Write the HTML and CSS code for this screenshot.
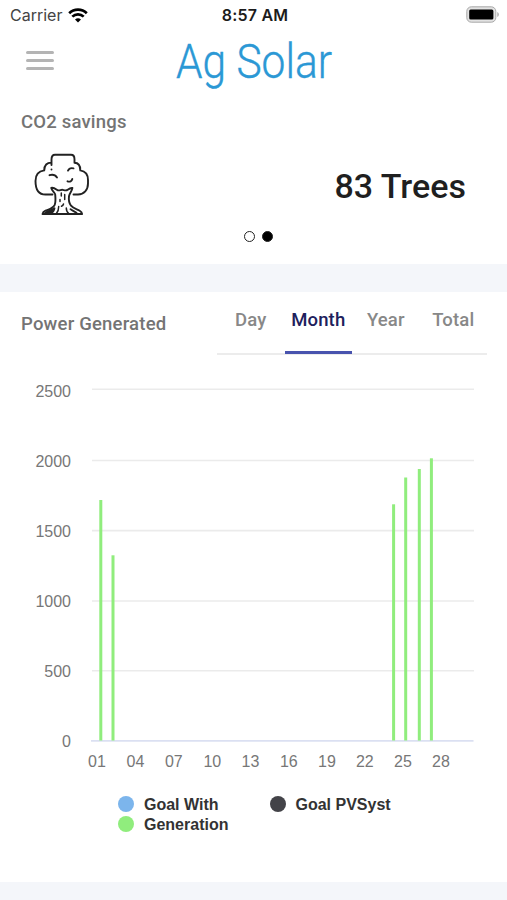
FILE: index.html
```html
<!DOCTYPE html>
<html lang="en">
<head>
    <meta charset="UTF-8">
    <meta name="viewport" content="width=device-width, initial-scale=1.0">
    <title>Ag Solar</title>
    <link rel="stylesheet" href="styles.css">
</head>
<body>
    <div class="status-bar">
        <div class="carrier">
            <span>Carrier</span>
            <svg class="wifi" width="20" height="15" viewBox="0 0 20 15">
                <path d="M1.2 5.2a12.6 12.6 0 0 1 17.6 0" />
                <path d="M4.3 8.6a8.2 8.2 0 0 1 11.4 0" />
                <path class="wifi-dot" d="M10 14.6 7 11.6a4.3 4.3 0 0 1 6 0z" />
            </svg>
        </div>
        <div class="clock">8:57 AM</div>
        <svg class="battery" width="34" height="17" viewBox="0 0 34 17">
            <rect x="0.8" y="0.8" width="29" height="15.4" rx="4.5" fill="#e2e2e2" stroke="#a9a9a9" />
            <rect x="3.2" y="3.4" width="24.2" height="10.2" rx="1.5" fill="#000" />
            <path d="M31.3 6v5c2-.8 2-4.200 0-5z" fill="#a9a9a9" />
        </svg>
    </div>

    <header class="header">
        <button class="menu-btn" aria-label="Menu">
            <span></span>
            <span></span>
            <span></span>
        </button>
        <svg class="logo" width="170" height="62" viewBox="0 0 170 62">
            <text x="1" y="40" textLength="156" lengthAdjust="spacingAndGlyphs">Ag Solar</text>
        </svg>
    </header>

    <section class="savings">
        <h2 class="title">CO2 savings</h2>
        <div class="savings-row">
            <svg class="tree" width="56" height="63" viewBox="14 8 56 63">
                <path d="M31.500 24.500v.1M31.500 20v-5.500c0-3 1-4.800 3.500-4.800h16c2.400 0 3.500 1.600 3.500 4.500v3.600c4 0 5.800 3 5.800 7.600 5 .8 7.700 4.500 7.700 9.600v3.500c0 6.500-4 11-10 11h-4.500M31.500 17.600c-4.500-.2-7.300 2.700-7.300 7.800-5.800.8-8.700 4.800-8.700 10.500 0 8.600 3.500 13.600 10 13.600h7" />
                <path d="M29.500 30.200c3.500-1 6 0 7.500 2.300M48 25.600c1-2.100 3.200-2.800 5.500-2.200M47.500 36.300c2.400.8 4.300-.1 4.800-2.300" />
                <path d="M35.200 49.500c0-1.700-3.500-3.800-4-6.600 2.300-.7 4.300.9 6.300 2.200 1.700 1.100 3.500-.7 5.200-.3 2 .5 3.300 1.300 5-.1 1.500-1.100 3-2 4.700-1.700-.2 2.600-3 5.500-3.400 8.100-.6 4.600.2 7.200 2 9.600 2.300 2.900 5.900 3.400 8.700 5 1.400.8 2.300 1.700 2.400 3.300H22.500c.2-1.700 1.200-2.500 3-3.300 3.400-1.500 7.500-2.200 9.200-5.800 1.200-2.800.8-7 .5-10.400z" />
                <path class="bark" d="M41.300 48v3M44.700 49.500v5M40 54.500v2M43.500 59c-.3 1.500-1 2-2 2.300M38.700 61.500c0 3-.8 5.300-2.300 7M46.300 63c0 2.400.9 4.300 2.500 5.500" />
                <path d="M24 69c3-3.600 7.500-3.700 10.500-5.800-.3 2.200-1.800 4.200-4 5.800zM50.500 64.200c2 2 5 2.300 7 4.800" fill="#222" />
            </svg>
            <div class="savings-value">83 Trees</div>
        </div>
        <div class="dots">
            <span class="dot"></span>
            <span class="dot active"></span>
        </div>
    </section>

    <section class="power">
        <div class="power-header">
            <h2 class="title">Power Generated</h2>
            <nav class="tabs">
                <a class="tab">Day</a>
                <a class="tab active">Month</a>
                <a class="tab">Year</a>
                <a class="tab">Total</a>
            </nav>
        </div>
        <svg class="chart" width="507" height="410" viewBox="0 370 507 410">
            <g class="grid">
                <path d="M92 389.200H474M92 460.500H474M92 530.600H474M92 601H474M92 670.700H474" />
                <path class="axis" d="M91 740.900H473.500" />
            </g>
            <g class="bars">
                <rect x="99.300" y="500" width="3" height="240.500" />
                <rect x="111.500" y="555.300" width="3" height="185.200" />
                <rect x="392.100" y="504.300" width="3" height="236.200" />
                <rect x="404.200" y="477.500" width="3" height="263" />
                <rect x="417.800" y="469" width="3" height="271.500" />
                <rect x="429.900" y="458.300" width="3" height="282.200" />
            </g>
            <g class="y-labels">
                <text x="71" y="397">2500</text>
                <text x="71" y="467">2000</text>
                <text x="71" y="537">1500</text>
                <text x="71" y="607">1000</text>
                <text x="71" y="677">500</text>
                <text x="71" y="747">0</text>
            </g>
            <g class="x-labels">
                <text x="97" y="767">01</text>
                <text x="135.500" y="767">04</text>
                <text x="173.800" y="767">07</text>
                <text x="212.300" y="767">10</text>
                <text x="250.500" y="767">13</text>
                <text x="288.800" y="767">16</text>
                <text x="327" y="767">19</text>
                <text x="364.800" y="767">22</text>
                <text x="403" y="767">25</text>
                <text x="441" y="767">28</text>
            </g>
        </svg>
        <div class="legend">
            <div class="legend-item"><span class="marker blue"></span>Goal With</div>
            <div class="legend-item"><span class="marker dark"></span>Goal PVSyst</div>
            <div class="legend-item"><span class="marker green"></span>Generation</div>
        </div>
    </section>
</body>
</html>
```

FILE: styles.css
```css
* {
    box-sizing: border-box;
}
body {
    margin: 0;
    height: 900px;
    overflow: hidden;
    font-family: Roboto, sans-serif;
    background-color: #f4f6fa;
}
.status-bar {
    display: grid;
    grid-template-columns: 1fr auto 1fr;
    align-items: center;
    height: 30px;
    padding: 0 7px 0 10px;
    background: white;
    font-family: Inter, sans-serif;
    font-size: 16px;
}
.carrier {
    display: flex;
    align-items: center;
    gap: 6px;
    color: #444;
}
.wifi {
    fill: none;
    stroke: #000;
    stroke-width: 2.7;
}
.wifi .wifi-dot {
    fill: #000;
    stroke: none;
}
.clock {
    font-weight: 600;
    color: #1c1c1c;
    letter-spacing: 0.2px;
}
.battery {
    justify-self: end;
    margin-bottom: 2px;
}
.header {
    display: flex;
    height: 70px;
    padding: 8px 26px 0;
    background: white;
}
.menu-btn {
    display: flex;
    flex-direction: column;
    gap: 5px;
    width: 29px;
    margin-top: 13px;
    padding: 0;
    border: none;
    background: none;
}
.menu-btn span {
    width: 28px;
    height: 3px;
    border-radius: 1.5px;
    background: #b4b4b4;
}
.logo {
    flex-shrink: 0;
    margin-left: 120px;
    font-size: 49px;
    font-weight: 300;
    fill: #2b98d5;
    stroke: #2b98d5;
    stroke-width: 0.4;
}
.title {
    margin: 0;
    font-size: 18.5px;
    line-height: 22px;
    font-weight: 500;
    letter-spacing: 0.2px;
    color: #747474;
}
.savings {
    height: 164px;
    padding: 11px 41px 0 21px;
    background: white;
}
.savings-row {
    display: flex;
    justify-content: space-between;
    align-items: center;
    height: 63px;
    margin-top: 20px;
    padding-left: 13px;
}
.tree {
    fill: none;
    stroke: #222;
    stroke-width: 1.9;
    stroke-linecap: round;
    stroke-linejoin: round;
}
.tree .bark {
    stroke-width: 1.5;
}
.savings-value {
    margin-top: 3px;
    font-size: 34px;
    font-weight: 500;
    color: #1f1f1f;
}
.dots {
    display: flex;
    gap: 7px;
    margin: 15px 0 0 223px;
}
.dot {
    width: 11px;
    height: 11px;
    border: 1px solid #222;
    border-radius: 50%;
}
.dot.active {
    background: #000;
}
.power {
    height: 590px;
    margin-top: 28px;
    background: white;
}
.power-header {
    display: flex;
    justify-content: space-between;
    height: 78px;
    padding: 0 20px 0 21px;
}
.power-header .title {
    margin-top: 21px;
}
.tabs {
    display: grid;
    grid-template-columns: repeat(4, 1fr);
    width: 270px;
    height: 63px;
    border-bottom: 2px solid #ececec;
}
.tab {
    height: 62px;
    padding-top: 17px;
    border-bottom: 3px solid transparent;
    font-size: 18.5px;
    line-height: 22px;
    font-weight: 500;
    letter-spacing: 0.15px;
    text-align: center;
    color: #888;
}
.tab.active {
    border-color: #4853ae;
    color: #20205c;
}
.chart {
    display: block;
    font-family: "Liberation Sans", sans-serif;
    font-size: 16px;
}
.grid path {
    stroke: #ebebeb;
    stroke-width: 1.6;
}
.grid .axis {
    stroke: #dbe0f2;
}
.bars rect {
    fill: #90ed7d;
}
.y-labels {
    fill: #777;
    text-anchor: end;
}
.x-labels {
    fill: #777;
    text-anchor: middle;
}
.legend {
    display: grid;
    grid-template-columns: 151.5px auto;
    justify-content: start;
    row-gap: 0;
    margin: 15px 0 0 118px;
    font-family: "Liberation Sans", sans-serif;
    font-size: 16px;
    font-weight: bold;
    color: #333;
}
.legend-item {
    display: flex;
    align-items: center;
    height: 20px;
}
.marker {
    width: 16px;
    height: 16px;
    margin: 0 10px 2px 0;
    border-radius: 50%;
}
.marker.blue {
    background: #7cb5ec;
}
.marker.dark {
    background: #434348;
}
.marker.green {
    background: #90ed7d;
}
```
